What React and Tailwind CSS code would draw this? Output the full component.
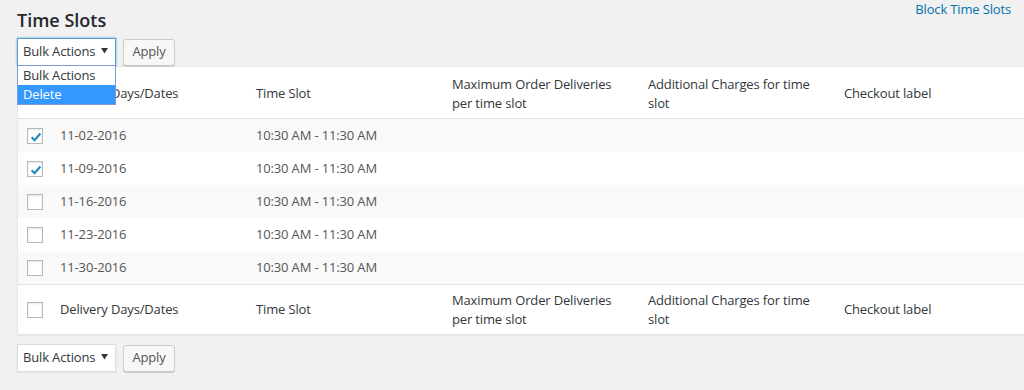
import React from "react";

const rows = [
  { date: "11-02-2016", checked: true, alt: true },
  { date: "11-09-2016", checked: true, alt: false },
  { date: "11-16-2016", checked: false, alt: true },
  { date: "11-23-2016", checked: false, alt: false },
  { date: "11-30-2016", checked: false, alt: true },
];

function Checkbox({ checked }) {
  return (
    <div className="relative w-[16px] h-[16px] border border-[#b4b9be] bg-white shadow-[inset_0_1px_2px_rgba(0,0,0,0.1)]">
      {checked && (
        <svg className="absolute left-[1px] top-[1px]" width="14" height="14" viewBox="0 0 14 14">
          <path d="M2.6 7.2 L5.6 10.2 L11.4 3.6" fill="none" stroke="#1e8cbe" strokeWidth="2.2" strokeLinecap="butt" strokeLinejoin="miter" />
        </svg>
      )}
    </div>
  );
}

function Select({ focused }) {
  return (
    <div
      className={`flex items-center justify-between w-[99px] h-[28px] bg-white pl-[5px] pr-[7px] text-[#32373c] whitespace-nowrap border ${
        focused ? "border-[#5b9dd9] shadow-[0_0_2px_rgba(30,140,190,0.8)]" : "border-[#ddd] shadow-[0_1px_2px_rgba(0,0,0,0.07)]"
      }`}
    >
      <span>Bulk Actions</span>
      <svg width="7" height="6" viewBox="0 0 7 6" className="mb-[2px]">
        <path d="M0 0 H7 L3.5 5.5 Z" fill="#32373c" />
      </svg>
    </div>
  );
}

function ApplyButton() {
  return (
    <div className="flex items-center justify-center w-[52px] h-[27px] ml-[7px] bg-[#f7f7f7] border border-[#ccc] rounded-[3px] text-[#555] shadow-[0_1px_0_#ccc]">
      Apply
    </div>
  );
}

function HeaderCells() {
  return (
    <>
      <div className="pl-[10px]">Delivery Days/Dates</div>
      <div className="pl-[10px]">Time Slot</div>
      <div className="pl-[10px] leading-[19px]">
        Maximum Order Deliveries
        <br />
        per time slot
      </div>
      <div className="pl-[10px] leading-[19px]">
        Additional Charges for time
        <br />
        slot
      </div>
      <div className="pl-[10px]">Checkout label</div>
    </>
  );
}

export default function App() {
  return (
    <div
      className="w-[1024px] h-[390px] overflow-hidden bg-[#f1f1f1] text-[13px] tracking-[-0.15px] text-[#32373c]"
      style={{ fontFamily: '"Open Sans", "Noto Sans", sans-serif' }}
    >
      <div className="pl-[17px] relative">
        <div className="flex justify-between">
          <h2 className="pt-[9px] text-[18px] font-semibold leading-[23px] text-[#23282d] tracking-normal">Time Slots</h2>
          <a className="pr-[13px] text-[#0073aa] leading-[18px]">Block Time Slots</a>
        </div>
        <div className="relative flex items-center mt-[6px]">
          <Select focused />
          <ApplyButton />
          <div className="absolute left-0 top-[27px] z-10 w-[99px] bg-white border border-[#7a9cd3] text-[#32373c] whitespace-nowrap">
            <div className="h-[19px] leading-[19px] pl-[5px]">Bulk Actions</div>
            <div className="h-[19px] leading-[19px] pl-[5px] bg-[#3399ff] text-white">Delete</div>
          </div>
        </div>

        <div className="w-[1030px] bg-white border border-[#e5e5e5] shadow-[0_1px_1px_rgba(0,0,0,0.04)]">
          <div className="grid grid-cols-[32px_196px_196px_196px_196px_196px] items-center h-[52px] border-b border-[#e1e1e1] pt-[2px]">
            <div className="pl-[9px]" />
            <HeaderCells />
          </div>
          {rows.map((r) => (
            <div
              key={r.date}
              className={`grid grid-cols-[32px_196px_196px_196px_196px_196px] items-center h-[33px] text-[#555] ${
                r.alt ? "bg-[#f9f9f9]" : "bg-white"
              }`}
            >
              <div className="pl-[9px]">
                <Checkbox checked={r.checked} />
              </div>
              <div className="pl-[10px]">{r.date}</div>
              <div className="pl-[10px]">10:30 AM - 11:30 AM</div>
              <div />
              <div />
              <div />
            </div>
          ))}
          <div className="grid grid-cols-[32px_196px_196px_196px_196px_196px] items-center h-[50px] border-t border-[#e1e1e1]">
            <div className="pl-[9px]">
              <Checkbox checked={false} />
            </div>
            <HeaderCells />
          </div>
        </div>

        <div className="flex items-center mt-[9px]">
          <Select />
          <ApplyButton />
        </div>
      </div>
    </div>
  );
}
